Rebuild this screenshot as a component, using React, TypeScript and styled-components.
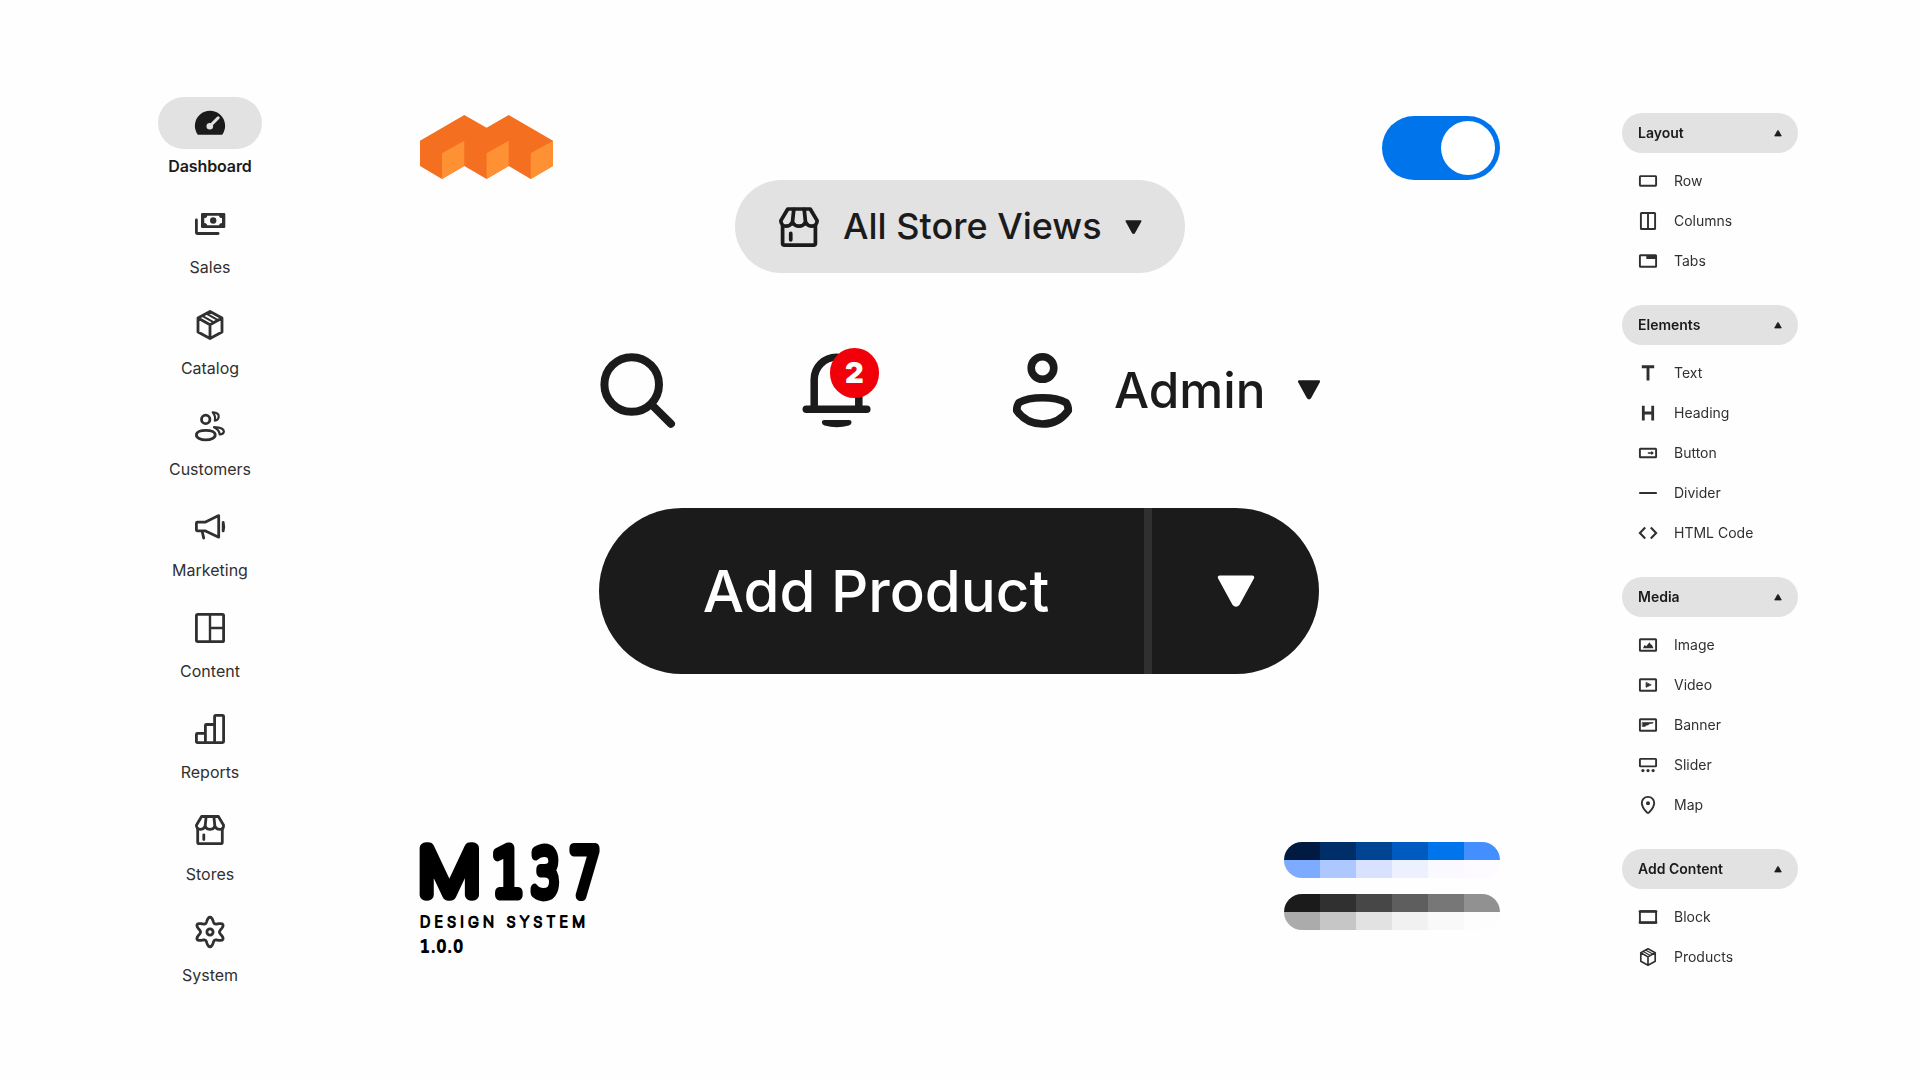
import React from "react";
import styled, { createGlobalStyle } from "styled-components";

const ink = "#1b1b1b";
const soft = "#303030";
const pill = "#e2e2e2";

const Global = createGlobalStyle`
  * { box-sizing: border-box; }
  body { margin: 0; background: #fefefe; font-family: Inter, "Liberation Sans", sans-serif; color: ${ink}; }
`;

const Page = styled.div`
  width: 1920px;
  height: 1080px;
  overflow: hidden;
  display: grid;
  grid-template-columns: 420px 1080px 420px;
`;

const SideNav = styled.nav`
  display: flex;
  flex-direction: column;
  align-items: center;
  padding-top: 97px;
`;

const NavItem = styled.a`
  width: 130px;
  height: 101.07px;
  display: flex;
  flex-direction: column;
  align-items: center;
  flex: none;
`;

const NavIcon = styled.span<{ $active?: boolean }>`
  width: 104px;
  height: 52px;
  border-radius: 26px;
  display: flex;
  align-items: center;
  justify-content: center;
  background: ${(p) => (p.$active ? pill : "transparent")};
`;

const NavLabel = styled.span<{ $active?: boolean }>`
  margin-top: 7.1px;
  font-size: 16px;
  line-height: 20px;
  letter-spacing: ${(p) => (p.$active ? "-0.1px" : "0")};
  white-space: nowrap;
  font-weight: ${(p) => (p.$active ? 600 : 400)};
  color: ${(p) => (p.$active ? ink : soft)};
`;

const Svg = styled.svg`
  display: block;
  flex: none;
  overflow: visible;
`;

const LineSvg = styled(Svg)`
  fill: none;
  stroke: currentColor;
  stroke-width: 2.8;
  stroke-linecap: round;
  stroke-linejoin: round;
`;

const Main = styled.main`
  display: flex;
  flex-direction: column;
  align-items: center;
  padding-top: 115px;
`;

const TopRow = styled.header`
  width: 100%;
  height: 65px;
  display: flex;
  justify-content: space-between;
`;

const Toggle = styled.button`
  width: 118px;
  height: 64px;
  margin-top: 1px;
  padding: 0 5px;
  border: 0;
  border-radius: 32px;
  background: #0074eb;
  display: flex;
  align-items: center;
  justify-content: flex-end;
`;

const Knob = styled.span`
  width: 54px;
  height: 54px;
  border-radius: 50%;
  background: #fff;
`;

const StorePill = styled.button`
  width: 450px;
  height: 93px;
  border: 0;
  border-radius: 47px;
  background: ${pill};
  color: ${ink};
  display: flex;
  align-items: center;
  padding: 0 43px 0 44px;
  font: 500 36px/44px Inter, sans-serif;
`;

const StoreText = styled.span`
  width: 260px;
  margin: 0 22px 2px 24px;
  text-align: left;
  white-space: nowrap;
`;

const ToolRow = styled.div`
  width: 720px;
  height: 80px;
  margin-top: 75px;
  display: flex;
  align-items: flex-start;
`;

const BellWrap = styled.div`
  position: relative;
  width: 70px;
  height: 80px;
  margin-left: 127px;
`;

const Badge = styled.span`
  position: absolute;
  left: 27.5px;
  top: 0;
  width: 49.5px;
  height: 49.5px;
  border-radius: 50%;
  background: #f10009;
  color: #fff;
  display: flex;
  align-items: center;
  justify-content: center;
  font-size: 29px;
  font-weight: 900;
`;

const Account = styled.div`
  display: flex;
  align-items: center;
  height: 80px;
  margin-left: 140px;
`;

const AdminText = styled.span`
  width: 182.5px;
  margin: 4px 0 0 40px;
  font-size: 49.5px;
  line-height: 60px;
  font-weight: 450;
`;

const AccountCaret = styled.span`
  margin-top: 4px;
`;

const SplitButton = styled.div`
  width: 720px;
  height: 166px;
  margin-top: 80px;
  margin-right: 2px;
  border-radius: 83px;
  overflow: hidden;
  background: ${ink};
  color: #fff;
  display: flex;
`;

const AddAction = styled.button`
  width: 545px;
  border: 0;
  padding: 0 0 0 9px;
  background: none;
  color: inherit;
  font: 500 58.200px/70px Inter, sans-serif;
  white-space: nowrap;
`;

const MoreAction = styled.button`
  flex: 1;
  border: 0;
  border-left: 8px solid #303030;
  background: none;
  color: inherit;
  display: flex;
  align-items: center;
  justify-content: center;
  padding: 0;
`;

const Footer = styled.footer`
  width: 100%;
  margin-top: 168px;
  display: flex;
  justify-content: space-between;
`;

const Palettes = styled.div`
  display: flex;
  flex-direction: column;
  gap: 16px;
`;

const Palette = styled.div`
  width: 216px;
  height: 36px;
  border-radius: 18px;
  overflow: hidden;
  display: grid;
  grid-template-columns: repeat(6, 36px);
  grid-auto-rows: 18px;
`;

const Swatch = styled.span<{ $c: string }>`
  background: ${(p) => p.$c};
`;

const Panel = styled.aside`
  width: 176px;
  margin: 113px 0 0 122px;
  display: flex;
  flex-direction: column;
  gap: 24px;
`;

const GroupHead = styled.div`
  height: 40px;
  margin-bottom: 8px;
  border-radius: 20px;
  background: ${pill};
  display: flex;
  align-items: center;
  justify-content: space-between;
  padding: 0 16px;
  font-size: 14px;
  font-weight: 600;
`;

const PanelItem = styled.div`
  height: 40px;
  display: flex;
  align-items: center;
  gap: 14px;
  padding-left: 14px;
  font-size: 14px;
  color: ${soft};
  white-space: nowrap;
`;

const PanelLabel = styled.span`
  line-height: 18px;
  transform: translateY(-0.5px);
  will-change: transform;
`;

const SmallSvg = styled(LineSvg)`
  stroke-width: 1.9;
`;

const Mark = styled.text`
  fill: #000;
  stroke: #000;
  stroke-linejoin: round;
  stroke-linecap: round;
`;

function gearPath(cx: number, cy: number) {
  const pts: string[] = [];
  for (let i = 0; i < 144; i++) {
    const a = (i / 144) * Math.PI * 2;
    const r = 11.9 + 2.7 * Math.cos(6 * a) + 0.25 * Math.cos(12 * a);
    pts.push(`${(cx + r * Math.sin(a)).toFixed(2)} ${(cy - r * Math.cos(a)).toFixed(2)}`);
  }
  return `M${pts.join("L")}Z`;
}

const StoreShape = () => (
  <>
    <path d="M6.600 1.500h16.800l5.200 8.700c0 2.400-1.400 4.200-3.800 4.200-2.200 0-3.800-1-4.900-2.900-1.100 1.900-2.700 2.900-4.900 2.900s-3.800-1-4.900-2.900c-1.100 1.900-2.700 2.900-4.900 2.900-2.400 0-3.800-1.800-3.800-4.200z" />
    <path d="M11.100 1.800l-1 9.700M18.900 1.800l1 9.700M2.700 14v13.200c0 1 .5 1.400 1.400 1.400h21.800c.9 0 1.400-.4 1.400-1.400V14M8.800 19.800v4.800" />
  </>
);

const BoxShape = () => (
  <>
    <path d="M15 1.400L27 8v14l-12 6.600L3 22V8zM3 8l12 6.800L27 8M15 14.800v13.800" />
    <path d="M11.400 3.600l11.600 6.500M7.200 5.900l11.600 6.500" strokeWidth="2" />
  </>
);

const navShapes: Record<string, React.ReactNode> = {
  Dashboard: (
    <>
      <path d="M3.600 25.400A13.700 13.700 0 1 1 26.400 25.400z" fill="currentColor" stroke="currentColor" />
      <path d="M15 18l8.200-8.200" stroke={pill} strokeWidth="3" />
      <circle cx="14.800" cy="18.200" r="3.300" fill={pill} stroke="none" />
    </>
  ),
  Sales: (
    <>
      <rect x="6" y="4" width="24.300" height="15" rx="1.300" fill="currentColor" stroke="none" />
      <path d="M12.200 6.700h11.900c0 1.500 1.100 2.400 2.900 2.400v4.800c-1.800 0-2.900.9-2.900 2.400H12.200c0-1.500-1.100-2.400-2.900-2.400V9.100c1.800 0 2.900-.9 2.900-2.400z" fill="#fefefe" stroke="none" />
      <circle cx="18.200" cy="11.500" r="3.200" fill="currentColor" stroke="none" />
      <path d="M1.400 11v12.200c0 .9.400 1.300 1.300 1.300h20.400" />
    </>
  ),
  Catalog: <BoxShape />,
  Customers: (
    <>
      <circle cx="10.700" cy="8.400" r="4.200" />
      <path d="M1.400 23.900c0-2.900 4.100-4.600 9.400-4.600s9.400 1.700 9.400 4.600-4.100 5-9.400 5-9.400-2.100-9.400-5z" />
      <path d="M17.700 1.400q6.500.3 6 4.700-.7 3.400-3.800 3.500 1-4.500-2.200-8.200zM19 16.200q9.900.4 9.900 4.500-.3 2.500-4.200 2.800-.2-4.600-5.700-7.300z" strokeWidth="2.200" />
    </>
  ),
  Marketing: (
    <>
      <path d="M2.400 10.200H10l13.700-6.600v21.600L10 18.800H2.400q-1 0-1-1v-6.600q0-1 1-1zM7.200 19.500l1.500 6.600" />
      <path d="M28.200 10.300q1.100 4.500 0 8.600z" />
    </>
  ),
  Content: (
    <>
      <rect x="1.400" y="1.400" width="27.200" height="27.200" rx="1.200" />
      <path d="M15 1.400v27.200M15 15h13.600" strokeWidth="2.400" />
    </>
  ),
  Reports: <path d="M27.600 28.600H2.400q-1 0-1-1v-7.200q0-1 1-1h8v9.200V11.500q0-1 1-1h8.200v18.100V2.400q0-1 1-1h7q1 0 1 1v25.200q0 1-1 1z" />,
  Stores: <StoreShape />,
  System: (
    <>
      <path d={gearPath(15, 15)} />
      <circle cx="15" cy="15" r="3.100" />
    </>
  ),
};

const frame = <rect x="3.900" y="6.200" width="16.200" height="11.600" rx="0.600" />;

const panelShapes: Record<string, React.ReactNode> = {
  Row: <rect x="3.900" y="7.100" width="16.200" height="9.600" rx="0.600" />,
  Columns: (
    <>
      <rect x="4.900" y="4" width="14.200" height="16" rx="0.600" />
      <path d="M12 4v16" />
    </>
  ),
  Tabs: (
    <>
      {frame}
      <path d="M10.300 6h10v4h-10z" fill="currentColor" stroke="none" />
    </>
  ),
  Text: <path d="M5.800 5.800h12.400M12 5.800v13.800" strokeWidth="2.900" strokeLinecap="butt" />,
  Heading: <path d="M7.300 4.700v14.800M16.700 4.700v14.800M7.300 12h9.400" strokeWidth="2.800" strokeLinecap="butt" />,
  Button: (
    <>
      <rect x="3.900" y="7.700" width="16.200" height="8.600" rx="0.600" />
      <path d="M12.400 12h4.400M15.700 11.100l1.200.9-1.200.9" strokeWidth="1.500" />
    </>
  ),
  Divider: <path d="M4 12h16" strokeWidth="2.200" />,
  "HTML Code": <path d="M9.200 6.600L3.900 12l5.300 5.400M14.800 6.600l5.300 5.400-5.300 5.400" strokeWidth="2.100" strokeLinecap="butt" strokeLinejoin="miter" />,
  Image: (
    <>
      {frame}
      <path d="M6.900 15.300l1.700-3.400 1.700 1.300 3.100-4 1.700 2.600h.8l1.500 3.500z" fill="currentColor" stroke="none" />
    </>
  ),
  Video: (
    <>
      {frame}
      <path d="M10.100 9.700v4.600l4.800-2.300z" fill="currentColor" strokeWidth="0.800" />
    </>
  ),
  Banner: (
    <>
      {frame}
      <path d="M6.500 9.500h10.600l-.3.700-3.400.5-1.200 1.300-2.200.2-.8 1.200H6.500z" fill="currentColor" strokeWidth="0.600" />
    </>
  ),
  Slider: (
    <>
      <rect x="3.900" y="5.900" width="16.200" height="7.500" rx="0.600" />
      <g fill="currentColor" stroke="none">
        <circle cx="6.900" cy="17.600" r="1.600" />
        <circle cx="12" cy="17.600" r="1.600" />
        <circle cx="17.100" cy="17.600" r="1.600" />
      </g>
    </>
  ),
  Map: (
    <>
      <path d="M12 3.900c3.600 0 6.200 2.700 6.200 6.100 0 3.800-2.800 7-4.800 9.200-.9 1-1.900 1-2.800 0C8.600 17 5.800 13.800 5.800 10c0-3.400 2.600-6.100 6.200-6.100z" />
      <circle cx="12" cy="10.200" r="2" fill="currentColor" stroke="none" />
    </>
  ),
  Block: (
    <>
      {frame}
      <path d="M3.900 6.500h16.200M3.900 17.500h16.200" strokeWidth="2.600" />
    </>
  ),
  Products: (
    <g transform="translate(3 3) scale(.6)" strokeWidth="2.800">
      <BoxShape />
    </g>
  ),
};

const groups = [
  { title: "Layout", items: ["Row", "Columns", "Tabs"] },
  { title: "Elements", items: ["Text", "Heading", "Button", "Divider", "HTML Code"] },
  { title: "Media", items: ["Image", "Video", "Banner", "Slider", "Map"] },
  { title: "Add Content", items: ["Block", "Products"] },
];

const blues = ["#001a41", "#002e69", "#004494", "#005bc1", "#0074eb", "#448fff", "#7dabff", "#adc7ff", "#d8e2ff", "#edf0ff", "#f9f9ff", "#fdfbff"];
const grays = ["#1b1b1b", "#303030", "#474747", "#5e5e5e", "#777777", "#919191", "#ababab", "#c6c6c6", "#e2e2e2", "#f1f1f1", "#f9f9f9", "#fdfdfd"];

const Caret = ({ w, h, up }: { w: number; h: number; up?: boolean }) => (
  <Svg width={w} height={h} viewBox="0 0 20 17">
    <path
      d="M1.300 1.300h17.400L11 15.300q-1 1.200-2 0z"
      fill="currentColor"
      stroke="currentColor"
      strokeWidth="2"
      strokeLinejoin="round"
      transform={up ? "rotate(180 10 8.500)" : undefined}
    />
  </Svg>
);

const Logo = () => (
  <Svg width="133" height="64" viewBox="0 0 133 64">
    <path d="M0 25.700L44.300 0l22.300 12.700L88.700 0 133 25.700V51l-22.300 13-22-13-22.100 13-22.300-13-22.300 13L0 51z" fill="#f47020" />
    <path d="M22 38.300l22.300-12.600V51L22 64zM66.600 38.300l22.100-12.600V51L66.600 64zM110.700 38.300L133 25.700V51l-22.300 13z" fill="#ff9135" />
  </Svg>
);

const Wordmark = () => (
  <Svg width="181" height="112" viewBox="0 0 181 112">
    <g fontFamily="Inter" fontWeight="100">
      <Mark x="0" y="0" fontSize="64" strokeWidth="11.500" transform="translate(-2 52.900) scale(1.095 1)">M</Mark>
      <Mark x="0" y="84.700" fontSize="14.200" strokeWidth="2" textLength="165">DESIGN SYSTEM</Mark>
    </g>
    <g fontFamily="DejaVu Sans" fontWeight="200">
      <Mark x="0" y="0" fontSize="64" strokeWidth="10.800" transform="translate(71.700 53) scale(.8 1)">1</Mark>
      <Mark x="0" y="0" fontSize="62.500" strokeWidth="10.800" transform="translate(110.900 52.500) scale(.73 1)">3</Mark>
      <Mark x="0" y="0" fontSize="64" strokeWidth="10.800" transform="translate(149.400 53) scale(.77 1)">7</Mark>
      <Mark x="0" y="110" fontSize="15.500" strokeWidth="2" textLength="43">1.0.0</Mark>
    </g>
  </Svg>
);

export default function App() {
  return (
    <Page>
      <Global />
      <SideNav>
        {Object.keys(navShapes).map((name, i) => (
          <NavItem key={name}>
            <NavIcon $active={i === 0}>
              <LineSvg width="30" height="30" viewBox="0 0 30 30" color={i === 0 ? ink : soft}>
                {navShapes[name]}
              </LineSvg>
            </NavIcon>
            <NavLabel $active={i === 0}>{name}</NavLabel>
          </NavItem>
        ))}
      </SideNav>

      <Main>
        <TopRow>
          <Logo />
          <Toggle aria-label="Toggle">
            <Knob />
          </Toggle>
        </TopRow>

        <StorePill>
          <LineSvg width="40" height="40" viewBox="0 0 30 30">
            <StoreShape />
          </LineSvg>
          <StoreText>All Store Views</StoreText>
          <Caret w={17} h={14} />
        </StorePill>

        <ToolRow>
          <Svg width="75" height="80" viewBox="0 0 75 80" fill="none" stroke={ink} strokeWidth="8" strokeLinecap="round">
            <circle cx="31.700" cy="36.500" r="27.300" />
            <path d="M52 57l19 18.800" />
          </Svg>
          <BellWrap>
            <Svg width="70" height="80" viewBox="0 0 70 80" fill="none" stroke={ink} strokeWidth="7.500" strokeLinecap="round">
              <path d="M12.200 60V31.500a22.300 22.300 0 0 1 44.600 0V60" />
              <path d="M4.300 61.200h60.500" />
              <path d="M22.500 72h24.400q2.600 0 2.600 2.400 0 2-2.600 3-12.200 3.600-24.400 0-2.600-1-2.600-3 0-2.400 2.600-2.400z" fill={ink} stroke="none" />
            </Svg>
            <Badge>2</Badge>
          </BellWrap>
          <Account>
            <Svg width="62" height="80" viewBox="0 0 62 80" fill="none" stroke={ink} strokeWidth="7.600">
              <circle cx="30.500" cy="20" r="11.300" />
              <path d="M7 54.500C13 51.200 22 49.800 30.500 49.800S48 51.200 54 54.500C55.500 56.500 56.300 59 56.300 62.500C50 71.500 41 76 30.500 76S11 71.500 4.700 62.500C4.700 59 5.500 56.500 7 54.500z" strokeLinejoin="round" />
            </Svg>
            <AdminText>Admin</AdminText>
            <AccountCaret>
              <Caret w={24} h={19.500} />
            </AccountCaret>
          </Account>
        </ToolRow>

        <SplitButton>
          <AddAction>Add Product</AddAction>
          <MoreAction aria-label="More">
            <Caret w={38} h={32} />
          </MoreAction>
        </SplitButton>

        <Footer>
          <Wordmark />
          <Palettes>
            {[blues, grays].map((set) => (
              <Palette key={set[0]}>
                {set.map((c) => (
                  <Swatch key={c} $c={c} />
                ))}
              </Palette>
            ))}
          </Palettes>
        </Footer>
      </Main>

      <Panel>
        {groups.map((g) => (
          <section key={g.title}>
            <GroupHead>
              <PanelLabel>{g.title}</PanelLabel>
              <Caret w={8} h={6.500} up />
            </GroupHead>
            {g.items.map((name) => (
              <PanelItem key={name}>
                <SmallSvg width="24" height="24" viewBox="0 0 24 24">
                  {panelShapes[name]}
                </SmallSvg>
                <PanelLabel>{name}</PanelLabel>
              </PanelItem>
            ))}
          </section>
        ))}
      </Panel>
    </Page>
  );
}
